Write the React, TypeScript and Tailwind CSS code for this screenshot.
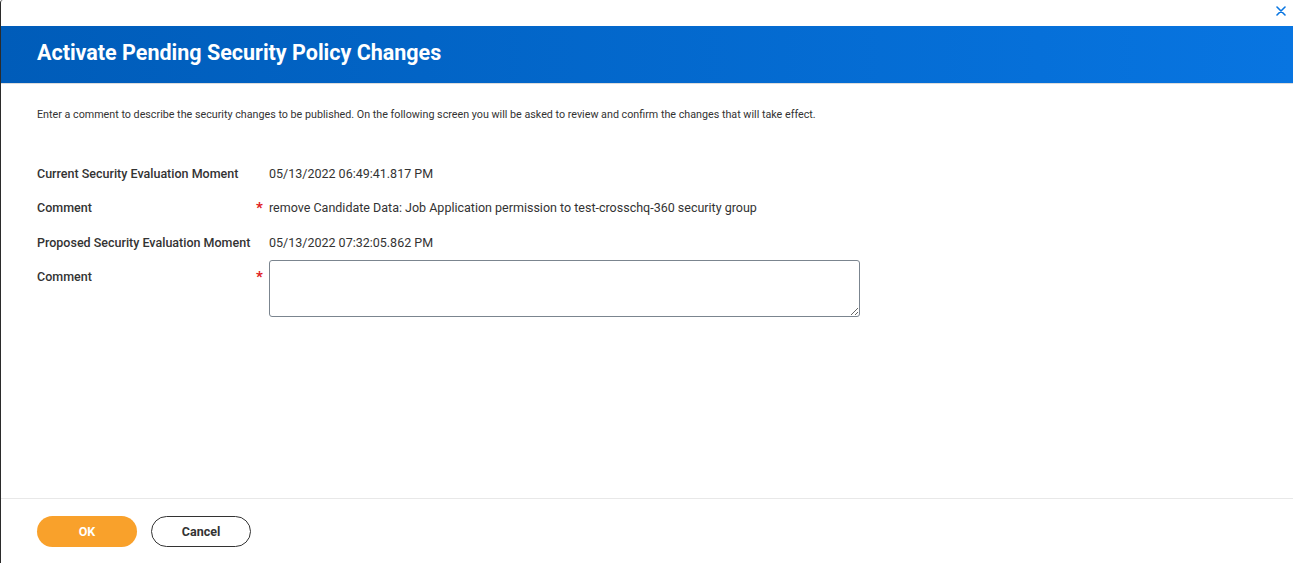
import React from "react";

const rows: { label: string; value?: string; required?: boolean; textarea?: boolean }[] = [
  { label: "Current Security Evaluation Moment", value: "05/13/2022 06:49:41.817 PM" },
  { label: "Comment", value: "remove Candidate Data: Job Application permission to test-crosschq-360 security group", required: true },
  { label: "Proposed Security Evaluation Moment", value: "05/13/2022 07:32:05.862 PM" },
  { label: "Comment", required: true, textarea: true },
];

export default function App() {
  return (
    <div
      className="w-[1293px] h-[563px] bg-white flex flex-col border-l border-[#2b2b2b] rounded-tl-[3px] overflow-hidden text-[#333333]"
      style={{ fontFamily: "Roboto, 'Liberation Sans', sans-serif" }}
    >
      <div className="h-[26px] flex items-center justify-end pr-[7px]">
        <svg width="10" height="10" viewBox="0 0 10 10" className="mt-[-4px]">
          <path d="M1 1 L9 9 M9 1 L1 9" stroke="#0875e1" strokeWidth="1.6" strokeLinecap="round" />
        </svg>
      </div>
      <div className="h-[58px] bg-gradient-to-r from-[#005cb9] to-[#0875e1] flex items-center pl-[36px] border-b border-[#dcdcdc]">
        <h1 className="text-white text-[21.5px] font-bold mt-[-2px]">Activate Pending Security Policy Changes</h1>
      </div>
      <div className="flex-1 flex flex-col pl-[36px]">
        <p className="text-[10.74px] mt-[23px] leading-[16px] text-[#333]">
          Enter a comment to describe the security changes to be published. On the following screen you will be asked to review and confirm the changes that will take effect.
        </p>
        <div className="flex flex-col mt-[42px]">
          {rows.map((r, i) => (
            <div key={i} className="flex items-start h-[34.33px]">
              <div className="w-[219px] text-[12.5px] font-medium leading-[18px] text-[#333]">{r.label}</div>
              <div className="w-[13px] text-[#e0201b] text-[15px] leading-[18px] font-bold">{r.required ? "*" : ""}</div>
              {r.textarea ? (
                <textarea className="w-[591px] h-[57px] mt-[-8px] border border-[#7b858f] rounded-[3px] resize-y" />
              ) : (
                <div className="text-[12.5px] leading-[18px] text-[#333]">{r.value}</div>
              )}
            </div>
          ))}
        </div>
      </div>
      <div className="h-[65px] border-t border-[#e8e8e8] flex items-start pt-[17px] pl-[36px] gap-[14px]">
        <button className="w-[100px] h-[31px] pt-[2px] rounded-full bg-[#f9a12b] text-white text-[12.5px] font-bold">OK</button>
        <button className="w-[100px] h-[31px] pt-[2px] rounded-full border border-[#333] text-[#333] text-[12.5px] font-bold bg-white">Cancel</button>
      </div>
    </div>
  );
}
